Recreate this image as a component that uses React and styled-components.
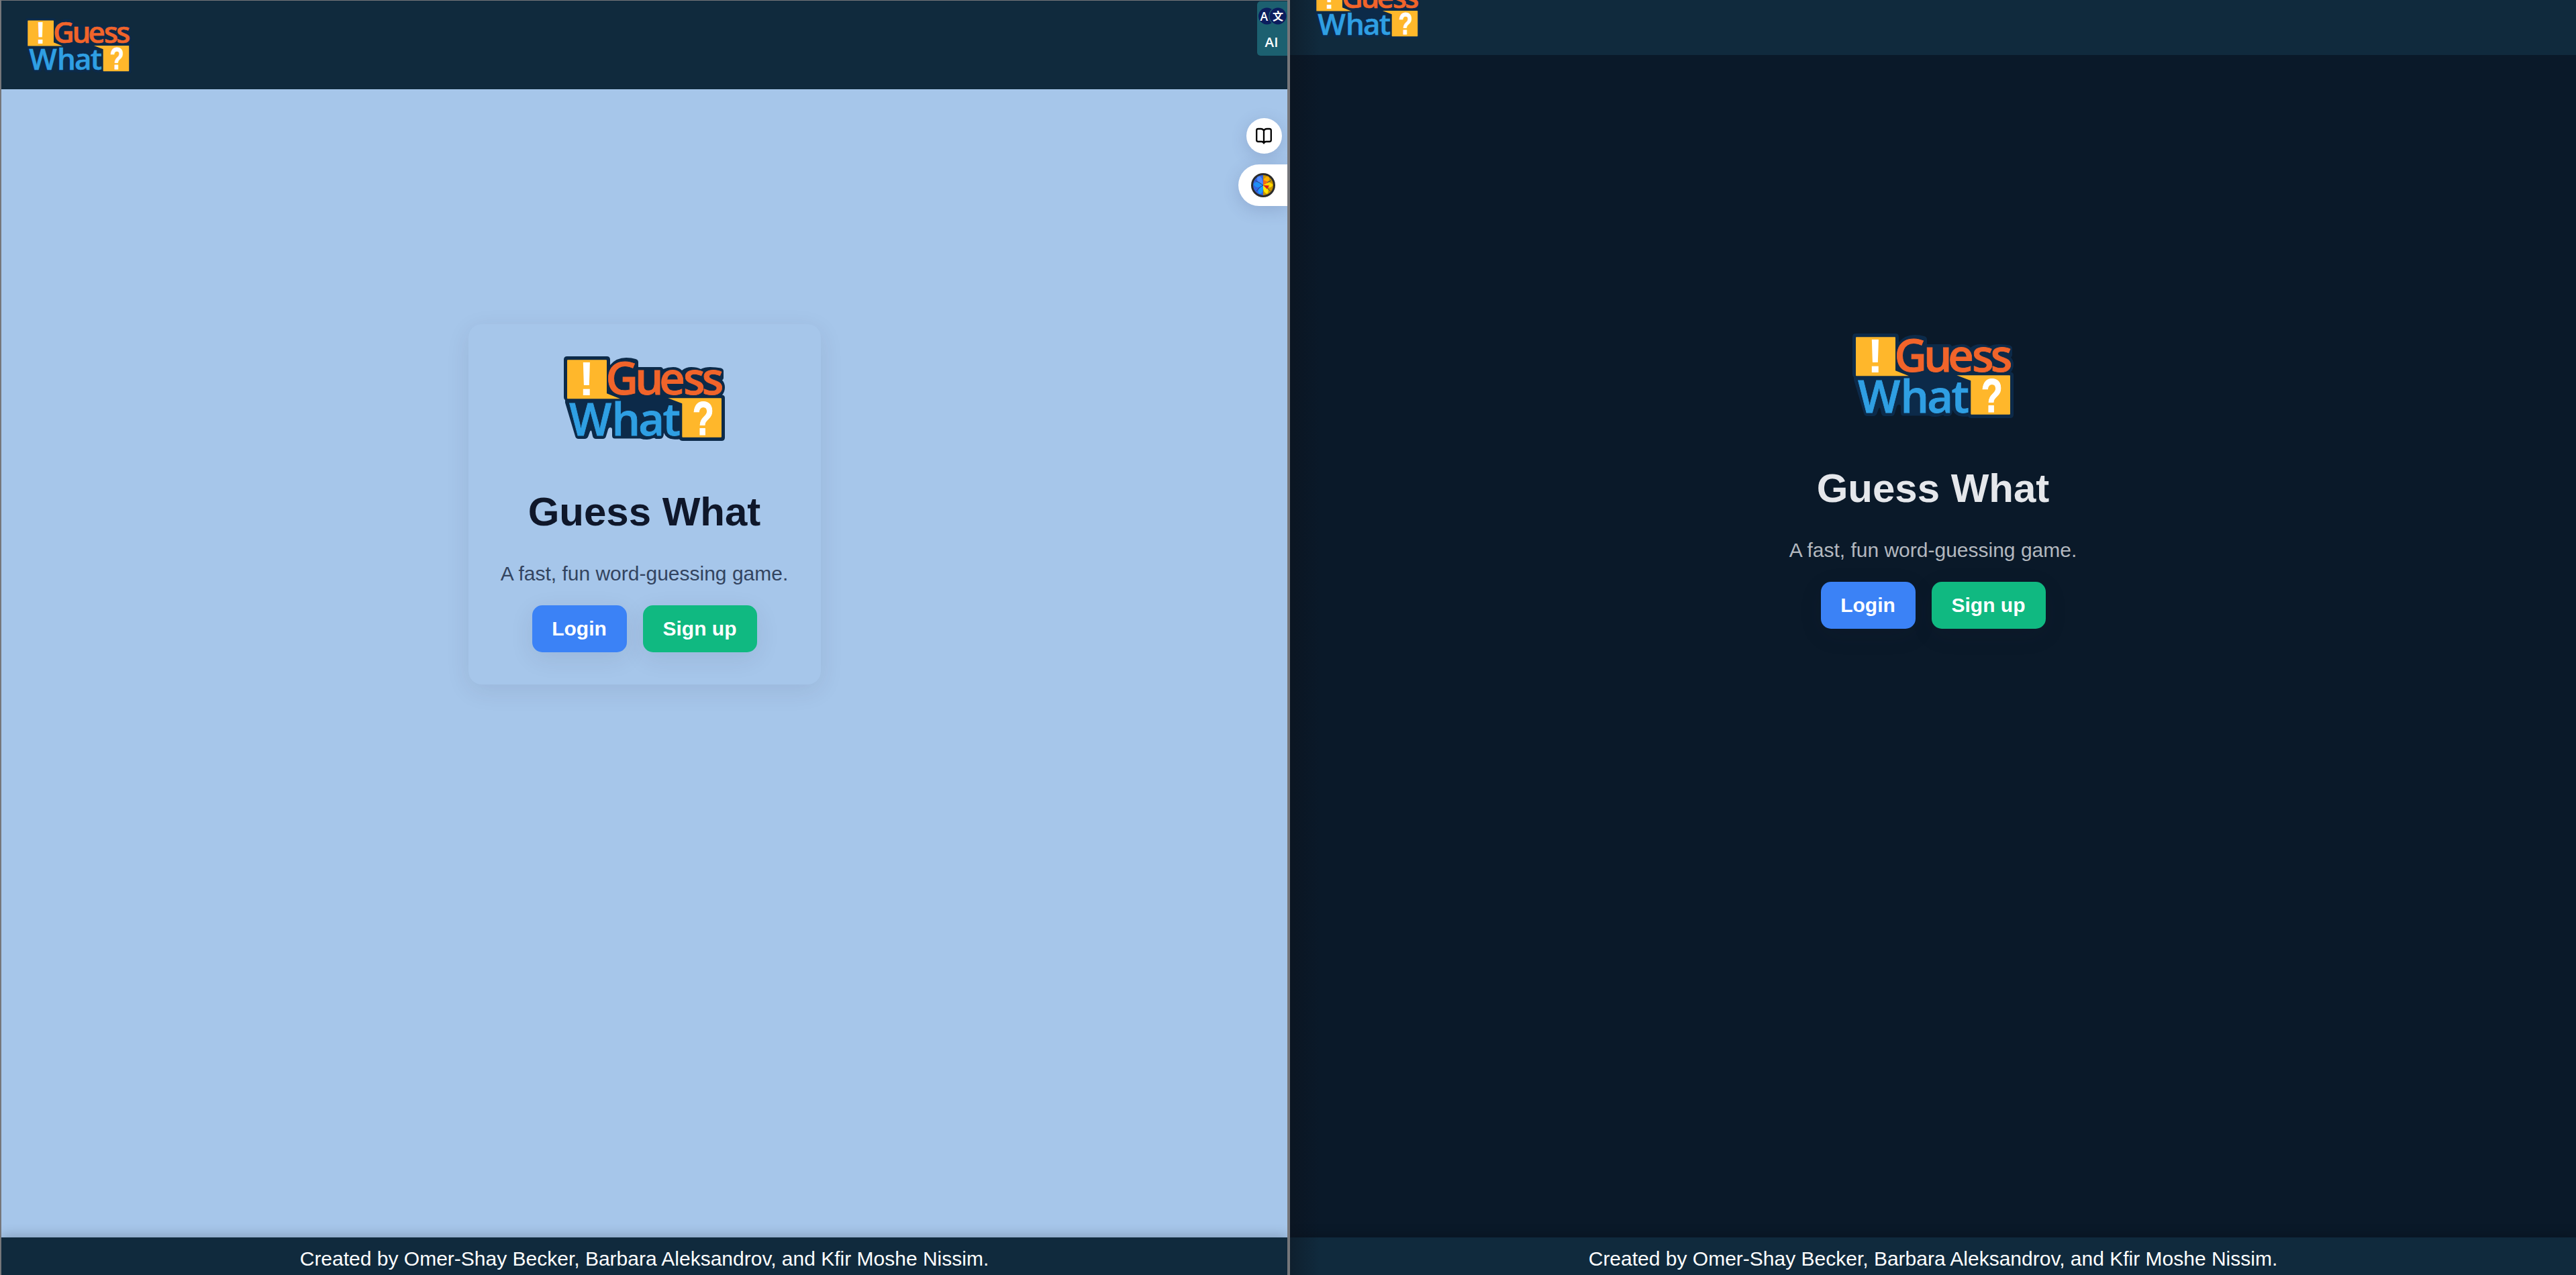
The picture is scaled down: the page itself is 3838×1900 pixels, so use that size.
import React from 'react';
import styled, { createGlobalStyle } from 'styled-components';

const GlobalStyle = createGlobalStyle`
  * { box-sizing: border-box; }
  body { margin: 0; background: #75767a; font-family: "Liberation Sans", Arial, sans-serif; }
`;

const Desktop = styled.div`
  display: flex;
  gap: 4px;
  width: 3838px;
  height: 1900px;
  overflow: hidden;
`;

const Page = styled.section`
  position: relative;
  display: flex;
  flex-direction: column;
  flex: none;
  overflow: hidden;
  width: ${(p) => (p.$dark ? 1916 : 1918)}px;
  height: 1900px;
  border-left: ${(p) => (p.$dark ? 0 : 2)}px solid #75767a;
  border-top: ${(p) => (p.$dark ? 0 : 1)}px solid #75767a;
  background: ${(p) => (p.$dark ? '#0a1929' : '#a6c6ea')};
`;

const Header = styled.header`
  display: flex;
  flex: none;
  align-items: flex-end;
  height: ${(p) => (p.$dark ? 82 : 132)}px;
  padding: 0 36px ${(p) => (p.$dark ? 24.5 : 23.5)}px;
  background: #102a3d;
`;

const Main = styled.main`
  display: flex;
  flex: 1;
  flex-direction: column;
  align-items: center;
  padding-top: ${(p) => (p.$dark ? 366.5 : 350)}px;
`;

const Card = styled.div`
  display: flex;
  flex-direction: column;
  align-items: center;
  width: 525px;
  height: 537px;
  padding: 48px 0;
  border-radius: 20px;
  box-shadow: ${(p) => (p.$dark ? 'none' : '0 9px 36px rgba(40, 30, 50, 0.09)')};
`;

const Title = styled.h1`
  margin: ${(p) => (p.$dark ? 72 : 73)}px 0 0;
  height: 66px;
  font-size: 60px;
  line-height: 66px;
  font-weight: 700;
  color: ${(p) => (p.$dark ? '#e5e7eb' : '#0f172a')};
`;

const Tagline = styled.p`
  margin: ${(p) => (p.$dark ? 41 : 40.5)}px 0 0;
  height: 36px;
  font-size: 30px;
  line-height: 36px;
  white-space: nowrap;
  color: ${(p) => (p.$dark ? '#b3b8bf' : '#334460')};
`;

const Actions = styled.div`
  display: flex;
  gap: 24px;
  margin-top: 29.5px;
`;

const Button = styled.button`
  width: ${(p) => (p.$primary ? 141 : 170)}px;
  height: 70px;
  padding: 0;
  border: 0;
  border-radius: 15px;
  font: 700 30px/70px "Liberation Sans", Arial, sans-serif;
  text-align: center;
  color: #fff;
  background: ${(p) => (p.$primary ? '#3b82f6' : '#10b981')};
  box-shadow: 0 9px 36px rgba(40, 30, 50, 0.09);
`;

const Footer = styled.footer`
  flex: none;
  height: 56px;
  font-size: 30px;
  line-height: 63px;
  text-align: center;
  color: #fff;
  background: #102a3d;
  box-shadow: 0 -3px 18px rgba(0, 0, 0, 0.2);
`;

const EdgeShade = styled.div`
  position: absolute;
  inset: 0 auto 0 0;
  width: 44px;
  background: linear-gradient(90deg, rgba(12, 16, 24, 0.4), rgba(12, 16, 24, 0));
`;

const TranslateTab = styled.div`
  position: absolute;
  top: 1px;
  right: 0;
  display: flex;
  flex-direction: column;
  align-items: center;
  width: 45px;
  height: 81px;
  padding-top: 7.5px;
  border-radius: 5px 0 0 5px;
  background: #1c6070;
  color: #fff;
`;

const TabLabel = styled.span`
  margin-top: 12.5px;
  padding-right: 2px;
  font: 600 20.5px/24px "Open Sans", sans-serif;
`;

const ReaderButton = styled.div`
  position: absolute;
  top: 175px;
  right: 8px;
  display: grid;
  place-items: center;
  width: 53px;
  height: 53px;
  padding-right: 1px;
  border-radius: 50%;
  background: #fff;
  box-shadow: 0 6px 24px rgba(60, 70, 120, 0.2);
`;

const SidePill = styled.div`
  position: absolute;
  top: 244px;
  right: 0;
  display: flex;
  align-items: center;
  width: 73px;
  height: 62px;
  padding-left: 19px;
  border-radius: 31px 0 0 31px;
  background: #fff;
  box-shadow: 0 6px 24px rgba(60, 70, 120, 0.2);
`;

const LogoSvg = styled.svg`
  display: block;
  flex: none;
  overflow: visible;
`;

const LogoWord = styled.text`
  font-family: "Open Sans", "Noto Sans", sans-serif;
  font-size: 67px;
  font-weight: 600;
  stroke-width: 0.8px;
`;

const LogoMark = styled.text`
  font-family: "Liberation Sans", Arial, sans-serif;
  font-size: 70px;
  font-weight: 700;
  fill: #fff;
`;

const LEFT_BUBBLE = 'M6 5.3H63q1 0 1 1V55.3L84 63.3H6q-1 0-1-1V6.3q0-1 1-1Z';
const RIGHT_BUBBLE = 'M155.3 62.3H234q1 0 1 1V119.7q0 1-1 1H177.3q-1 0-1-1V70.3Z';
const BACKDROP =
  'M5 0H64Q69 0 69 5V13Q78 2 93 2Q101 2 107 4Q111 5 111 9V16H144Q147 16 148 19Q155 16 163 16Q171 16 176 21Q182 16 190 16Q199 16 204 19Q210 16 218 16Q227 16 234 17.5Q238 18.5 238 22V32Q238 34 236 35.5Q240 40 240 46Q240 53 236 57.5Q240 58 240 62V121Q240 126 235 126H177Q174 126 172 123.5Q168 124 163 123.5Q153 123 149 114Q149 123 143 123H137Q135 121 133 122Q128 124 124 124Q118 124 114 122.5H76Q72 122.5 72 118V109Q72 106 69 106Q67 106 66 109L63 119Q62 123 58 123H48Q44 123 43 119L41.5 112Q40.5 109 39 112L36.5 119Q35 123 31 123H22Q18 123 17 119L2 69V65Q0 64 0 60V5Q0 0 5 0Z';

function Logo({ width }) {
  return (
    <LogoSvg width={width} height={(width * 126) / 240} viewBox="0 0 240 126">
      <path d={BACKDROP} fill="#0c2a49" />
      <path d={LEFT_BUBBLE} fill="#ffb72b" />
      <path d={RIGHT_BUBBLE} fill="#ffb72b" />
      <LogoWord x="62.5 106 142.3 178 205.7" y="57" fill="#f1642a" stroke="#f1642a">Guess</LogoWord>
      <LogoWord x="8 71.5 111.2 147.5" y="118" fill="#2f9fe3" stroke="#2f9fe3">What</LogoWord>
      <LogoMark x="22.3" y="58">!</LogoMark>
      <LogoMark transform="translate(191.8 116.5) scale(0.75 1)" stroke="#fff" strokeWidth="1.2">?</LogoMark>
    </LogoSvg>
  );
}

const Glyph = styled.text`
  font-family: "Open Sans", "Noto Sans CJK SC", sans-serif;
  font-weight: 600;
  fill: #fff;
  text-anchor: middle;
`;

function TranslateIcon() {
  return (
    <svg width="44" height="28" viewBox="0 0 44 28">
      <circle cx="13.5" cy="14" r="12.5" fill="#0b1d5e" />
      <circle cx="30" cy="14" r="13.7" fill="#1c6070" />
      <circle cx="30" cy="14" r="12.5" fill="#0b1d5e" />
      <Glyph x="9.3" y="20.5" fontSize="17.5">A</Glyph>
      <Glyph x="30" y="20" fontSize="16">文</Glyph>
    </svg>
  );
}

function BookIcon() {
  return (
    <svg width="26" height="26" viewBox="0 0 26 26" fill="none" stroke="#000" strokeWidth="2.3" strokeLinecap="round" strokeLinejoin="round">
      <path d="M13 4.8Q12 2 8.5 2H4.5Q2.2 2 2.2 4.3V18.7Q2.2 21 4.5 21H9.5Q12.2 21 13 23.5Q13.8 21 16.5 21H21.5Q23.8 21 23.8 18.7V4.3Q23.8 2 21.5 2H17.5Q14 2 13 4.8V23.5" />
    </svg>
  );
}

function BallIcon() {
  return (
    <svg width="36" height="36" viewBox="0 0 36 36">
      <circle cx="18" cy="18" r="18" fill="#2b2b2b" />
      <path d="M18 3A15 15 0 0 0 18 33Z" fill="#3564e0" />
      <path d="M18 3A15 15 0 0 1 18 33Z" fill="#c99400" />
      <path d="M18 18Q7 14 9.5 5.5Q17 2 18 18Z" fill="#4d8cff" />
      <path d="M18 18Q9 25 3.5 17Q8 9 18 18Z" fill="#1f8ff5" />
      <path d="M18 18Q19 30 13 31Q6 26 18 18Z" fill="#1a9cff" />
      <path d="M18 18Q17 6 25.5 4.5Q31 11 18 18Z" fill="#ffae00" />
      <path d="M18 18Q26 10 32.5 17.5Q29 25 18 18Z" fill="#ffd800" />
      <path d="M18 18Q29 23 24 31Q17 29 18 18Z" fill="#ffe600" />
      <path d="M18 18V9Q20 12 27 13Z" fill="#f46a10" />
      <path d="M18 18L27 18.5L24 24Z" fill="#d81f1f" />
      <path d="M6 11L12 14L18 18M8 27L12 22L18 18M30 11L24 14M29 27L25 23" fill="none" stroke="#23407f" strokeWidth="0.9" />
    </svg>
  );
}

function Home({ dark, children }) {
  return (
    <Page $dark={dark}>
      <Header $dark={dark}><Logo width={157.5} /></Header>
      <Main $dark={dark}>
        <Card $dark={dark}>
          <Logo width={240} />
          <Title $dark={dark}>Guess What</Title>
          <Tagline $dark={dark}>A fast, fun word-guessing game.</Tagline>
          <Actions>
            <Button $primary>Login</Button>
            <Button>Sign up</Button>
          </Actions>
        </Card>
      </Main>
      <Footer>Created by Omer-Shay Becker, Barbara Aleksandrov, and Kfir Moshe Nissim.</Footer>
      {children}
    </Page>
  );
}

export default function App() {
  return (
    <>
      <GlobalStyle />
      <Desktop>
        <Home>
          <TranslateTab>
            <TranslateIcon />
            <TabLabel>AI</TabLabel>
          </TranslateTab>
          <ReaderButton><BookIcon /></ReaderButton>
          <SidePill><BallIcon /></SidePill>
        </Home>
        <Home dark>
          <EdgeShade />
        </Home>
      </Desktop>
    </>
  );
}
